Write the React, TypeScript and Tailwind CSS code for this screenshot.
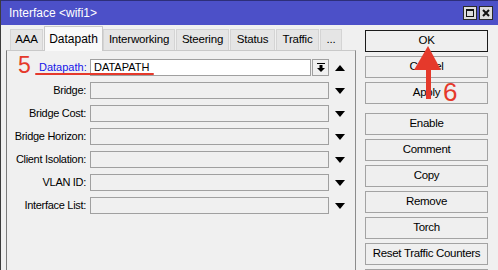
const tabs = [
  { name: 'AAA', w: 'w-[33px]' },
  { name: 'Datapath', w: 'w-[59px]', active: true },
  { name: 'Interworking', w: 'w-[72px]' },
  { name: 'Steering', w: 'w-[53px]' },
  { name: 'Status', w: 'w-[45px]' },
  { name: 'Traffic', w: 'w-[43px]' },
  { name: '...', w: 'w-[22px]' },
];

const fields = ['Bridge', 'Bridge Cost', 'Bridge Horizon', 'Client Isolation', 'VLAN ID', 'Interface List'];

const actions = ['Enable', 'Comment', 'Copy', 'Remove', 'Torch', 'Reset Traffic Counters'];

function Tri({ up }: { up?: boolean }) {
  return (
    <svg width="10" height="6" viewBox="0 0 10 6" className="block">
      <polygon points={up ? '5,0 10,6 0,6' : '0,0 10,0 5,6'} fill="#000" />
    </svg>
  );
}

function Btn({ label, primary }: { label: string; primary?: boolean }) {
  return (
    <div
      className={
        'h-[22px] w-[123px] flex items-center justify-center border bg-[#efefef] text-[11.5px] tracking-[-0.3px] text-black ' +
        (primary ? 'border-[#1b1b1b]' : 'border-[#a3a3a3]')
      }
    >
      {label}
    </div>
  );
}

export default function App() {
  return (
    <div
      className="relative w-[498px] h-[270px] overflow-hidden bg-[#f0f0f0] border-l border-[#3c3c3c]"
      style={{ fontFamily: '"Liberation Sans", Arial, sans-serif' }}
    >
      {/* title bar */}
      <div className="h-[25px] bg-[#4c50c8] border-t border-[#2d2f7a] flex items-center pl-[8px] pr-[5px]">
        <span className="text-white text-[12px]">Interface &lt;wifi1&gt;</span>
        <div className="ml-auto flex gap-[2px]">
          <div className="w-[14px] h-[14px] bg-[#dcdcdc] border border-[#2a2a2a] flex items-center justify-center">
            <div className="w-[8px] h-[8px] border border-[#111] border-t-2" />
          </div>
          <div className="w-[14px] h-[14px] bg-[#dcdcdc] border border-[#2a2a2a] flex items-center justify-center">
            <svg width="8" height="8" viewBox="0 0 8 8">
              <path d="M1 1 L7 7 M7 1 L1 7" stroke="#111" strokeWidth="2" />
            </svg>
          </div>
        </div>
      </div>

      <div className="flex">
        {/* left: tabs + panel */}
        <div className="w-[355px] pl-[5px]">
          <div className="h-[25px] flex items-end pl-[4px]">
            {tabs.map((t) =>
              t.active ? (
                <div
                  key={t.name}
                  className={`${t.w} h-[25px] -mb-px z-10 bg-[#f9f9f9] border border-b-0 border-[#c9c9c9] flex items-center justify-center text-[12px] text-black`}
                >
                  {t.name}
                </div>
              ) : (
                <div
                  key={t.name}
                  className={`${t.w} h-[21px] mr-px bg-[#e5e5e5] border border-b-0 border-[#d4d4d4] flex items-center justify-center text-[11.5px] tracking-[-0.2px] text-black`}
                >
                  {t.name}
                </div>
              )
            )}
          </div>
          <div className="h-[230px] border-t border-l border-r border-t-[#c9c9c9] border-l-[#7a7a7a] border-r-[#8c8c8c] bg-[#f0f0f0] pt-[8px]">
            <div className="flex items-center h-[17px] mb-[6px]">
              <div className="w-[79px] pl-[32px] text-[11px] text-[#1515e8]">Datapath:</div>
              <div className="ml-[4px] w-[221px] h-[17px] bg-white border border-[#a0a0a0] flex items-center pl-[3px] text-[11px] text-black">
                DATAPATH
              </div>
              <div className="ml-px w-[17px] h-[17px] bg-[#f0f0f0] border border-[#a0a0a0] flex items-center justify-center">
                <svg width="8" height="9" viewBox="0 0 8 9">
                  <rect x="0" y="0" width="8" height="1" fill="#000" />
                  <polygon points="2.5,2 5.5,2 5.5,5 8,5 4,9 0,5 2.5,5" fill="#000" />
                </svg>
              </div>
              <div className="ml-[6px]">
                <Tri up />
              </div>
            </div>
            {fields.map((f) => (
              <div key={f} className="flex items-center h-[17px] mb-[6px]">
                <div className="w-[79px] text-right text-[11px] tracking-[-0.3px] text-black whitespace-nowrap">{f}:</div>
                <div className="ml-[4px] w-[239px] h-[17px] bg-[#f0f0f0] border border-[#a0a0a0]" />
                <div className="ml-[6px]">
                  <Tri />
                </div>
              </div>
            ))}
          </div>
        </div>

        {/* right: buttons */}
        <div className="ml-[9px] pt-[5px] flex flex-col gap-[4px]">
          <Btn label="OK" primary />
          <Btn label="Cancel" />
          <Btn label="Apply" />
          <div className="mt-[5px] flex flex-col gap-[4px]">
            {actions.map((a) => (
              <Btn key={a} label={a} />
            ))}
            <Btn label="" />
          </div>
        </div>
      </div>

      {/* annotations */}
      <span className="absolute left-[17px] top-[54px] text-[23px] leading-none text-[#e5392b] font-light">5</span>
      <div className="absolute left-[34px] top-[73px] w-[119px] h-[2px] rounded-full bg-[#e5392b]" />
      <svg className="absolute left-[413px] top-[46px]" width="28" height="54" viewBox="0 0 28 54">
        <polygon points="14,0 27,24 0,24" fill="#e5392b" />
        <rect x="12" y="22" width="5" height="31" fill="#e5392b" />
      </svg>
      <span className="absolute left-[442px] top-[79px] text-[26px] leading-none text-[#e5392b] font-light">6</span>
    </div>
  );
}
